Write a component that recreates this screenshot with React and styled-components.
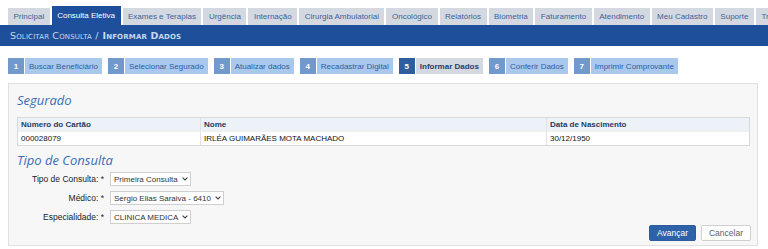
import React from 'react'
import styled, { createGlobalStyle } from 'styled-components'

const GlobalStyle = createGlobalStyle`
  body {
    margin: 0;
    background: #ffffff;
    font-family: "Liberation Sans", Arial, sans-serif;
  }
`

const Page = styled.div`
  width: 768px;
  height: 249px;
  overflow: hidden;
`

const TabBar = styled.div`
  display: flex;
  align-items: flex-end;
  gap: 2px;
  height: 25px;
  padding-left: 8px;
  background: #ffffff;
  white-space: nowrap;
  overflow: hidden;
`

const Tab = styled.div`
  flex: none;
  display: flex;
  align-items: center;
  height: ${p => (p.$active ? '19px' : '17px')};
  padding: 0 5.5px;
  background: ${p => (p.$active ? '#1d4f9b' : '#d4d9e1')};
  color: ${p => (p.$active ? '#ffffff' : '#3b629c')};
  font-size: 8px;
`

const Header = styled.div`
  display: flex;
  align-items: center;
  height: 21px;
  padding-left: 10px;
  background: #1d4f9b;
  color: #c9d8ef;
  font-family: "DejaVu Sans", Verdana, sans-serif;
  font-size: 9.5px;
  font-variant: small-caps;
  letter-spacing: 0.15px;
`

const HeaderStrong = styled.span`
  font-weight: bold;
  margin-left: 4px;
`

const Steps = styled.div`
  display: flex;
  gap: 6px;
  margin-top: 12px;
  padding-left: 8px;
`

const Step = styled.div`
  display: flex;
  height: 16px;
  gap: 1px;
`

const StepNum = styled.div`
  width: 16px;
  display: flex;
  align-items: center;
  justify-content: center;
  background: ${p => (p.$active ? '#2d5e9f' : '#7199cc')};
  color: #ffffff;
  font-size: 8px;
  font-weight: bold;
`

const StepLabel = styled.div`
  display: flex;
  align-items: center;
  padding: 0 4px;
  background: ${p => (p.$active ? '#d4d9e1' : '#aac8ec')};
  color: ${p => (p.$active ? '#213f6c' : '#2d5da3')};
  font-size: 8px;
  font-weight: ${p => (p.$active ? 'bold' : 'normal')};
`

const Panel = styled.div`
  margin: 9px 10px 0 8px;
  height: 163px;
  box-sizing: border-box;
  padding: 7px 6px 0 8px;
  border: 1px solid #e0e0e0;
  background: #f7f7f7;
  display: flex;
  flex-direction: column;
`

const SectionTitle = styled.div`
  font-family: "Open Sans", sans-serif;
  font-style: italic;
  font-size: 13px;
  line-height: 18px;
  margin-top: ${p => p.$gap || '0px'};
  color: #3a6cb4;
`

const Table = styled.div`
  margin-top: 8px;
  margin-right: 1px;
  border: 1px solid #d9d9d9;
  background: #ffffff;
`

const Row = styled.div`
  display: grid;
  grid-template-columns: 182px 346px 1fr;
  height: 13px;
  align-items: center;
  background: ${p => (p.$head ? '#edf2f9' : '#ffffff')};
  color: ${p => (p.$head ? '#1f3b63' : '#111111')};
  font-size: 8px;
  font-weight: ${p => (p.$head ? 'bold' : 'normal')};
  & + & {
    border-top: 1px solid #f0f0f0;
  }
`

const Cell = styled.div`
  padding-left: 3px;
  border-left: ${p => (p.$first ? 'none' : '1px solid #e2e2e2')};
  height: 100%;
  display: flex;
  align-items: center;
`

const Form = styled.div`
  display: grid;
  grid-template-columns: 87px auto;
  column-gap: 6px;
  row-gap: 5px;
  margin-top: 3px;
  align-items: center;
  justify-items: start;
`

const Label = styled.div`
  justify-self: end;
  font-size: 8.5px;
  color: #1b1b1b;
`

const Select = styled.div`
  display: flex;
  align-items: center;
  gap: 4px;
  height: 12px;
  padding: 0 2px 0 3px;
  border: 1px solid #cfcfcf;
  background: #ffffff;
  color: #333333;
  font-size: 8px;
`

const Chevron = () => (
  <svg width="6" height="4" viewBox="0 0 6 4">
    <path d="M0.6 0.6 L3 3 L5.4 0.6" fill="none" stroke="#444" strokeWidth="1.1" />
  </svg>
)

const Actions = styled.div`
  display: flex;
  justify-content: flex-end;
  gap: 5px;
  margin-top: auto;
  margin-bottom: 4px;
`

const Button = styled.div`
  height: 16px;
  box-sizing: border-box;
  padding: 0 7px;
  display: flex;
  align-items: center;
  border-radius: 2px;
  font-size: 8.5px;
  background: ${p => (p.$primary ? '#2d62a9' : '#ffffff')};
  color: ${p => (p.$primary ? '#ffffff' : '#555f6c')};
  border: 1px solid ${p => (p.$primary ? '#2a5c9f' : '#cfcfcf')};
`

const tabs = [
  'Principal', 'Consulta Eletiva', 'Exames e Terapias', 'Urgência', 'Internação',
  'Cirurgia Ambulatorial', 'Oncológico', 'Relatórios', 'Biometria', 'Faturamento',
  'Atendimento', 'Meu Cadastro', 'Suporte', 'Treinamento'
]

const steps = [
  'Buscar Beneficiário', 'Selecionar Segurado', 'Atualizar dados', 'Recadastrar Digital',
  'Informar Dados', 'Conferir Dados', 'Imprimir Comprovante'
]

export default function App () {
  return (
    <Page>
      <GlobalStyle />
      <TabBar>
        {tabs.map(t => <Tab key={t} $active={t === 'Consulta Eletiva'}>{t}</Tab>)}
      </TabBar>
      <Header>
        Solicitar Consulta /<HeaderStrong>Informar Dados</HeaderStrong>
      </Header>
      <Steps>
        {steps.map((s, i) => (
          <Step key={s}>
            <StepNum $active={i === 4}>{i + 1}</StepNum>
            <StepLabel $active={i === 4}>{s}</StepLabel>
          </Step>
        ))}
      </Steps>
      <Panel>
        <SectionTitle>Segurado</SectionTitle>
        <Table>
          <Row $head>
            <Cell $first>Número do Cartão</Cell>
            <Cell>Nome</Cell>
            <Cell>Data de Nascimento</Cell>
          </Row>
          <Row>
            <Cell $first>000028079</Cell>
            <Cell>IRLÉA GUIMARÃES MOTA MACHADO</Cell>
            <Cell>30/12/1950</Cell>
          </Row>
        </Table>
        <SectionTitle $gap="5px">Tipo de Consulta</SectionTitle>
        <Form>
          <Label>Tipo de Consulta: *</Label>
          <Select>Primeira Consulta <Chevron /></Select>
          <Label>Médico: *</Label>
          <Select>Sergio Elias Saraiva - 6410 <Chevron /></Select>
          <Label>Especialidade: *</Label>
          <Select>CLINICA MEDICA <Chevron /></Select>
        </Form>
        <Actions>
          <Button $primary>Avançar</Button>
          <Button>Cancelar</Button>
        </Actions>
      </Panel>
    </Page>
  )
}
